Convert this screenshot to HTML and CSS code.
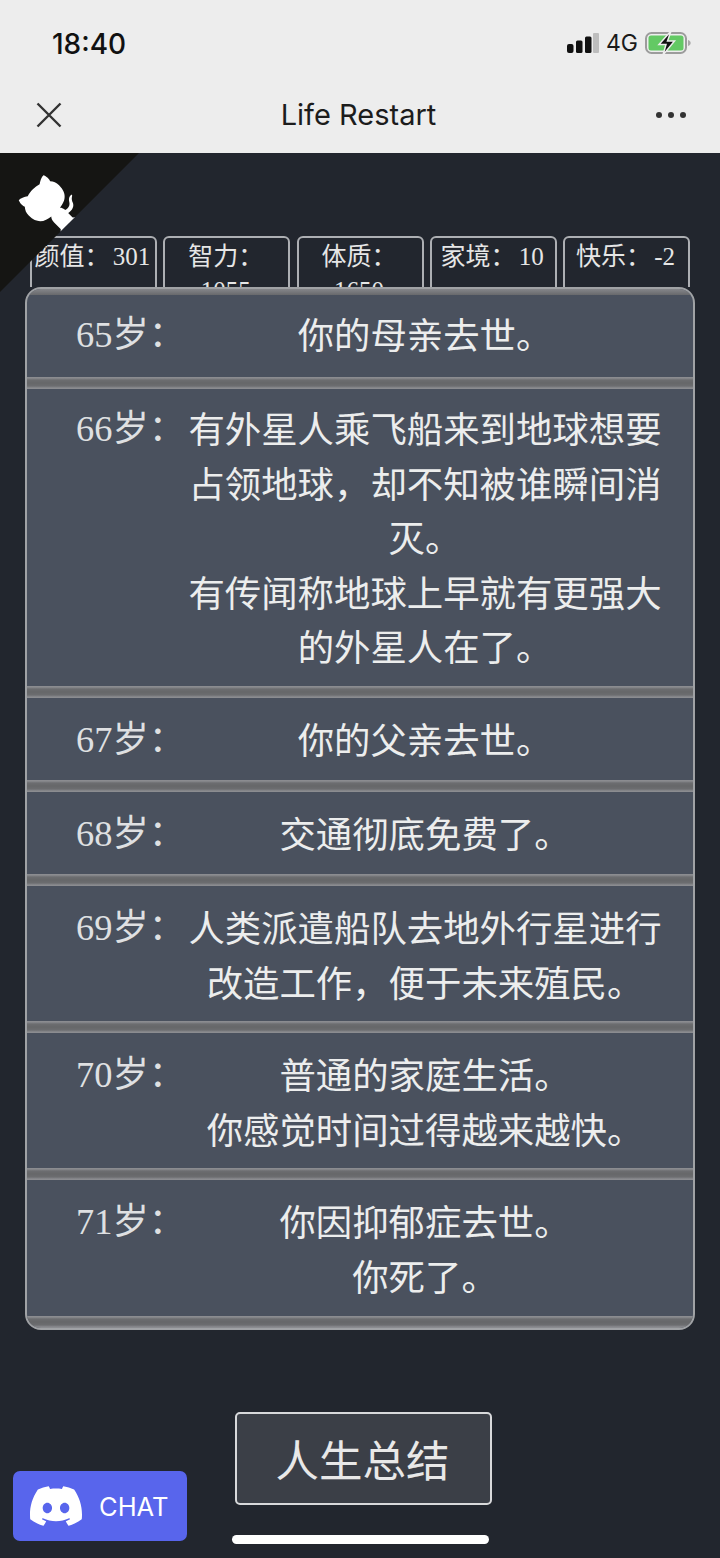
FILE: index.html
```html
<!DOCTYPE html>
<html lang="zh-CN">
<head>
<meta charset="utf-8">
<title>Life Restart</title>
<link rel="stylesheet" href="styles.css">
</head>
<body>
<div class="phone">
  <header class="chrome">
    <div class="status">
      <span class="clock">18:40</span>
      <div class="status-right">
        <svg class="signal" viewBox="0 0 32 20" width="32" height="20"><rect x="0" y="11" width="6.500" height="9" rx="2" fill="#111"/><rect x="9" y="7.500" width="6.500" height="12.500" rx="1.500" fill="#111"/><rect x="18" y="3.500" width="6.500" height="16.500" rx="1.500" fill="#111"/><rect x="26" y="0" width="6" height="20" rx="1" fill="#bdbdbd"/></svg>
        <span class="net">4G</span>
        <svg class="battery" viewBox="0 0 46 24" width="46" height="24"><rect x="1" y="2" width="40" height="20" rx="5.500" fill="none" stroke="#9c9c9c" stroke-width="2"/><rect x="3.500" y="4.500" width="35" height="15" rx="2.500" fill="#63c964"/><path d="M43 9v6c1.700-.5 2.700-1.600 2.700-3s-1-2.500-2.700-3z" fill="#a9a9a9"/><path d="M26 0 14 13.500h7L18 24 29.500 10h-7z" fill="#111" stroke="#ededed" stroke-width="1.500"/></svg>
      </div>
    </div>
    <nav class="navbar">
      <svg class="close" viewBox="0 0 26 26" width="26" height="26"><path d="M1.500 1.500 24.500 24.500M24.500 1.500 1.500 24.500" stroke="#333" stroke-width="2.400" fill="none"/></svg>
      <span class="title">Life Restart</span>
      <svg class="more" viewBox="0 0 32 8" width="32" height="8"><circle cx="4" cy="4" r="3" fill="#333"/><circle cx="16" cy="4" r="3" fill="#333"/><circle cx="28" cy="4" r="3" fill="#333"/></svg>
    </nav>
  </header>

  <main class="game">
    <svg class="corner" viewBox="0 0 250 250" width="139" height="139" aria-hidden="true"><g transform="translate(250,0) scale(-1,1)"><path d="M0,0 L115,115 L130,115 L142,142 L250,250 L250,0 Z" fill="#151513"/><path d="M128.300,109.000 C113.800,99.700 119.000,89.600 119.000,89.600 C122.000,82.700 120.500,78.600 120.500,78.600 C119.200,72.000 123.400,76.300 123.400,76.300 C127.300,80.900 125.500,87.300 125.500,87.300 C122.900,97.600 130.600,101.900 134.400,103.200" fill="#fff"/><path d="M115.000,115.000 C114.900,115.100 118.700,116.500 119.800,115.400 L133.700,101.600 C136.900,99.200 139.900,98.400 142.200,98.600 C133.800,88.000 127.500,74.400 143.800,58.000 C148.500,53.400 154.000,51.200 159.700,51.000 C160.300,49.400 163.200,43.600 171.400,40.100 C171.400,40.100 176.100,42.500 178.800,56.200 C183.100,58.600 187.200,61.800 190.900,65.400 C194.500,69.000 197.700,73.200 200.100,77.600 C213.800,80.200 216.300,84.900 216.300,84.900 C212.700,93.100 206.900,96.000 205.400,96.600 C205.100,102.400 203.000,107.800 198.300,112.500 C181.900,128.900 168.300,122.500 157.700,114.100 C157.900,116.900 156.700,120.900 152.700,124.900 L141.000,136.500 C139.800,137.700 141.600,141.900 141.800,141.800 Z" fill="#fff"/></g></svg>

    <ul class="stats">
      <li class="stat">颜值： 301</li>
      <li class="stat">智力： 1055</li>
      <li class="stat">体质： 1650</li>
      <li class="stat">家境： 10</li>
      <li class="stat">快乐： -2</li>
    </ul>

    <ul class="log">
      <li class="entry"><div class="row"><span class="age">65岁：</span><span class="text">你的母亲去世。</span></div></li>
      <li class="entry"><div class="row row-long"><span class="age">66岁：</span><span class="text">有外星人乘飞船来到地球想要占领地球，却不知被谁瞬间消灭。<br>有传闻称地球上早就有更强大的外星人在了。</span></div></li>
      <li class="entry"><div class="row"><span class="age">67岁：</span><span class="text">你的父亲去世。</span></div></li>
      <li class="entry"><div class="row"><span class="age">68岁：</span><span class="text">交通彻底免费了。</span></div></li>
      <li class="entry"><div class="row"><span class="age">69岁：</span><span class="text">人类派遣船队去地外行星进行改造工作，便于未来殖民。</span></div></li>
      <li class="entry"><div class="row"><span class="age">70岁：</span><span class="text">普通的家庭生活。<br>你感觉时间过得越来越快。</span></div></li>
      <li class="entry"><div class="row"><span class="age">71岁：</span><span class="text">你因抑郁症去世。<br>你死了。</span></div></li>
    </ul>

    <div class="actions"><button class="summary">人生总结</button></div>

    <a class="discord">
      <svg viewBox="0 0 24 24" width="52" height="52"><path fill="#fff" d="M20.317 4.3698a19.7913 19.7913 0 00-4.8851-1.5152.0741.0741 0 00-.0785.0371c-.211.3753-.4447.8648-.6083 1.2495-1.8447-.2762-3.68-.2762-5.4868 0-.1636-.3933-.4058-.8742-.6177-1.2495a.077.077 0 00-.0785-.037 19.7363 19.7363 0 00-4.8852 1.515.0699.0699 0 00-.0321.0277C.5334 9.0458-.319 13.5799.0992 18.0578a.0824.0824 0 00.0312.0561c2.0528 1.5076 4.0413 2.4228 5.9929 3.0294a.0777.0777 0 00.0842-.0276c.4616-.6304.8731-1.2952 1.226-1.9942a.076.076 0 00-.0416-.1057c-.6528-.2476-1.2743-.5495-1.8722-.8923a.077.077 0 01-.0076-.1277c.1258-.0943.2517-.1923.3718-.2914a.0743.0743 0 01.0776-.0105c3.9278 1.7933 8.18 1.7933 12.0614 0a.0739.0739 0 01.0785.0095c.1202.099.246.1981.3728.2924a.077.077 0 01-.0066.1276 12.2986 12.2986 0 01-1.873.8914.0766.0766 0 00-.0407.1067c.3604.698.7719 1.3628 1.225 1.9932a.076.076 0 00.0842.0286c1.961-.6067 3.9495-1.5219 6.0023-3.0294a.077.077 0 00.0313-.0552c.5004-5.177-.8382-9.6739-3.5485-13.6604a.061.061 0 00-.0312-.0286zM8.02 15.3312c-1.1825 0-2.1569-1.0857-2.1569-2.419 0-1.3332.9555-2.4189 2.157-2.4189 1.2108 0 2.1757 1.0952 2.1568 2.419 0 1.3332-.9555 2.4189-2.1569 2.4189zm7.9748 0c-1.1825 0-2.1569-1.0857-2.1569-2.419 0-1.3332.9554-2.4189 2.1569-2.4189 1.2108 0 2.1757 1.0952 2.1568 2.419 0 1.3332-.946 2.4189-2.1568 2.4189Z"/></svg>
      <span>CHAT</span>
    </a>
    <div class="home-bar"></div>
  </main>
</div>
</body>
</html>
```
FILE: styles.css
```css
* { box-sizing: border-box; }
html, body { margin: 0; padding: 0; }
body { width: 720px; height: 1558px; overflow: hidden; background: #22262e; }
ul { list-style: none; margin: 0; padding: 0; }

.phone { display: flex; flex-direction: column; width: 720px; height: 1558px; }

.chrome { height: 153px; flex: none; background: #ededed; color: #111; font-family: Inter, "Liberation Sans", sans-serif; }
.status { height: 85px; padding: 26px 29px 0 52px; display: flex; justify-content: space-between; align-items: flex-start; }
.clock { font-size: 28px; line-height: 34px; font-weight: 500; margin-top: 1px; }
.status-right { display: flex; align-items: center; gap: 7px; height: 34px; }
.net { font-size: 23px; line-height: 26px; color: #1a1a1a; }
.navbar { height: 68px; padding: 0 33px 9px 36px; display: flex; align-items: center; justify-content: space-between; }
.title { font-size: 29px; color: #1c1c1c; font-weight: 400; }

.game { position: relative; flex: 1; display: flex; flex-direction: column; align-items: flex-start; font-family: "Liberation Serif", "Noto Sans CJK SC", serif; color: #e6e6e6; }
.corner { position: absolute; left: 0; top: 0; }

.stats { width: 660px; height: 51px; margin: 83px 0 0 30px; display: flex; justify-content: space-between; overflow: hidden; flex: none; }
.stat { width: 127px; height: 90px; flex: none; border: 2px solid #adafb3; border-radius: 6px; padding: 2px 2px 0 0; font-size: 25px; line-height: 34px; word-spacing: -3px; text-align: center; }

.log { width: 670px; flex: none; margin-left: 25px; border: 2px solid #a0a2a5; border-radius: 16px; overflow: hidden; background: #4a515e; }
.log::before { content: ""; display: block; height: 6px; background: linear-gradient(#85868a, #68696c); }
.entry::after { content: ""; display: block; height: 12px; background: linear-gradient(#8b8c90 0, #8b8c90 8%, #6c6d70 25%, #666769 50%, #6c6d70 75%, #8b8c90 92%, #8b8c90 100%); }
.row { display: flex; min-height: 82px; padding: 13px 0 13px 49px; }
.entry:first-child .row { padding-top: 11px; }
.row-long { padding: 11px 0 13px 49px; }
.age { width: 109px; height: 54px; flex: none; white-space: nowrap; padding-top: 2px; font-size: 36.400px; line-height: 54.600px; color: #dfe0e2; }
.text { width: 480px; flex: none; font-size: 36.400px; line-height: 54.600px; text-align: center; color: #eceded; font-family: "Noto Sans CJK SC", sans-serif; }

.actions { flex: none; margin: 82px 0 0 235px; }
.summary { display: block; width: 257px; height: 93px; background: #3b3f47; border: 2px solid #d8d9db; border-radius: 5px; color: #e8e8e8; font-family: "Noto Sans CJK SC", sans-serif; font-size: 43.500px; padding: 0 2px 0 0; }

.discord { position: absolute; left: 13px; top: 1318px; width: 174px; height: 70px; background: #5865ec; border-radius: 7px; display: flex; align-items: center; padding-left: 17px; gap: 17px; color: #fff; font-family: Inter, "Liberation Sans", sans-serif; font-size: 25.500px; }
.home-bar { position: absolute; left: 232px; top: 1382px; width: 257px; height: 9px; background: #fff; border-radius: 5px; }
```
